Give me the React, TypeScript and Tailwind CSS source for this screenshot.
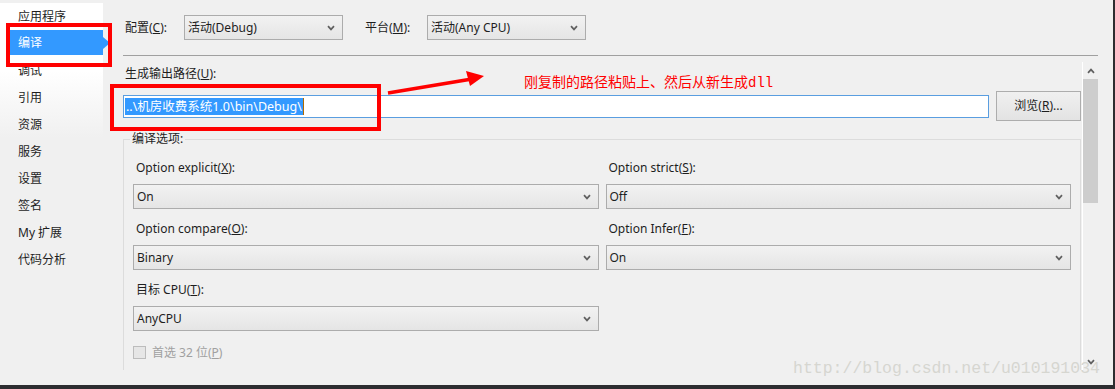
import type { ReactNode } from "react";

const SIDEBAR = ["应用程序", "编译", "调试", "引用", "资源", "服务", "设置", "签名", "My 扩展", "代码分析"];

function Chevron({ up = false, color = "#606060" }: { up?: boolean; color?: string }) {
  return (
    <svg width="8" height="6" viewBox="0 0 8 6" className="shrink-0">
      <path d={up ? "M1 4.8L4 1.6L7 4.8" : "M1 1.2L4 4.4L7 1.2"} fill="none" stroke={color} strokeWidth="1.7" />
    </svg>
  );
}

function Select({ value, className = "" }: { value: string; className?: string }) {
  return (
    <div
      className={`h-[25px] flex items-center justify-between border border-[#acacac] bg-linear-to-b from-[#f2f2f2] to-[#e5e5e5] pl-[3px] pr-[7px] text-[12px] text-[#1e1e1e] ${className}`}
    >
      <span>{value}</span>
      <Chevron />
    </div>
  );
}

function Field({ label, value }: { label: ReactNode; value: string }) {
  return (
    <div className="flex flex-col">
      <div className="h-[16px] leading-[16px] text-[12px] pl-[3px]">{label}</div>
      <Select value={value} className="mt-[8px]" />
    </div>
  );
}

function Sidebar() {
  return (
    <div className="w-[103px] shrink-0 pt-[3px]">
      <div className="bg-linear-to-b from-white via-white to-[#f0f0f0]">
        {SIDEBAR.slice(0, 5).map((name) => (
          <SideItem key={name} name={name} />
        ))}
      </div>
      {SIDEBAR.slice(5).map((name) => (
        <SideItem key={name} name={name} />
      ))}
    </div>
  );
}

function SideItem({ name }: { name: string }) {
  if (name === "编译") {
    return (
      <div className="h-[27px] flex items-start">
        <div className="relative ml-[9px] h-[25px] flex-1 bg-[#3399ff] text-white text-[12px] flex items-center pl-[9px]">
          {name}
          {/* selection pointer */}
          <div className="absolute -right-[7px] top-[7px] w-0 h-0 border-y-[6px] border-y-transparent border-l-[7px] border-l-[#3399ff]" />
        </div>
      </div>
    );
  }
  return <div className="h-[27px] flex items-center pl-[18px] text-[12px] text-[#1e1e1e]">{name}</div>;
}

function Scrollbar() {
  return (
    <div className="w-[16px] mt-[6px] h-[308px] border-l border-white flex flex-col">
      <div className="h-[17px] flex items-center justify-center">
        <Chevron up />
      </div>
      <div className="h-[124px] bg-[#cdcdcd]" />
      <div className="flex-1" />
      <div className="h-[17px] flex items-center justify-center">
        <Chevron />
      </div>
    </div>
  );
}

export default function App() {
  return (
    <div className="relative w-[1115px] h-[389px] overflow-hidden bg-[#f0f0f0] flex flex-col font-['Noto_Sans','Noto_Sans_CJK_SC',sans-serif] text-[#1e1e1e]">
      <div className="flex flex-1 min-h-0">
        <Sidebar />

        <main className="flex-1 flex flex-col pl-[20px] pr-[15px]">
          {/* configuration / platform */}
          <div className="pt-[15px] flex items-center text-[12px]">
            <span className="w-[61px] pl-[2px]">
              配置(<u>C</u>):
            </span>
            <Select value="活动(Debug)" className="w-[159px]" />
            <span className="w-[62px] ml-[22px]">
              平台(<u>M</u>):
            </span>
            <Select value="活动(Any CPU)" className="w-[159px]" />
          </div>
          <div className="mt-[15px] h-px bg-[#a0a0a0]" />

          <div className="flex flex-1">
            <div className="flex-1 pr-px">
              <div className="pt-[10px] h-[26px] leading-[16px] text-[12px] pl-[2px]">
                生成输出路径(<u>U</u>):
              </div>
              <div className="mt-[9px] flex items-center gap-[7px]">
                <div className="flex-1 h-[23px] bg-white border border-[#5a9ee0] flex items-center pl-px">
                  <span className="bg-[#3399ff] text-white text-[12.5px] leading-[17px] px-px">..\机房收费系统1.0\bin\Debug\</span>
                  <span className="w-px h-[17px] bg-[#b06a00]" />
                </div>
                <button className="w-[85px] h-[30px] border border-[#adadad] bg-linear-to-b from-[#f0f0f0] to-[#e3e3e3] text-[12px] text-[#1e1e1e]">
                  浏览(<u>R</u>)...
                </button>
              </div>

              {/* compile options group */}
              <div className="relative mt-[18px] h-[231px] border-t border-x border-[#dcdcdc] pt-[20px] px-[9px]">
                <span className="absolute -top-[9px] left-[6px] px-[2px] bg-[#f0f0f0] text-[12px] leading-[16px]">编译选项:</span>
                <div className="grid grid-cols-2 gap-x-[7px] gap-y-[12px]">
                  <Field label={<>Option explicit(<u>X</u>):</>} value="On" />
                  <Field label={<>Option strict(<u>S</u>):</>} value="Off" />
                  <Field label={<>Option compare(<u>O</u>):</>} value="Binary" />
                  <Field label={<>Option Infer(<u>F</u>):</>} value="On" />
                  <Field label={<>目标 CPU(<u>T</u>):</>} value="AnyCPU" />
                </div>
                <div className="mt-[15px] flex items-center gap-[6px] text-[12px] text-[#a0a0a0]">
                  <div className="w-[13px] h-[13px] border border-[#bcbcbc] bg-[#e6e6e6]" />
                  <span className="leading-[13px]">
                    首选 32 位(<u>P</u>)
                  </span>
                </div>
              </div>
            </div>
            <Scrollbar />
          </div>
        </main>

        <div className="w-[2px] bg-[#2d2d30]" />
      </div>
      <div className="h-[4px] bg-[#2d2d30]" />

      {/* annotations drawn on top of the screenshot */}
      <div className="absolute left-[6px] top-[23px] w-[106px] h-[44px] border-[4px] border-[#ff0000]" />
      <div className="absolute left-[110px] top-[84px] w-[271px] h-[47px] border-[4px] border-[#ff0000]" />
      <svg className="absolute left-0 top-0" width="1115" height="389">
        <line x1="388" y1="93" x2="472" y2="79" stroke="#ff0000" strokeWidth="3.5" />
        <polygon points="466,71 470,86 484,76" fill="#ff0000" />
      </svg>
      <div className="absolute left-[524px] top-[75px] text-[14px] leading-[16px] text-[#ff0000] font-['Liberation_Mono','Noto_Sans_CJK_SC',monospace]">
        刚复制的路径粘贴上、然后从新生成dll
      </div>
      <div className="absolute left-[793px] top-[360px] text-[16.5px] leading-[18px] text-[#d6d6d0] font-['Liberation_Mono',monospace]">
        http://blog.csdn.net/u010191034
      </div>
    </div>
  );
}
